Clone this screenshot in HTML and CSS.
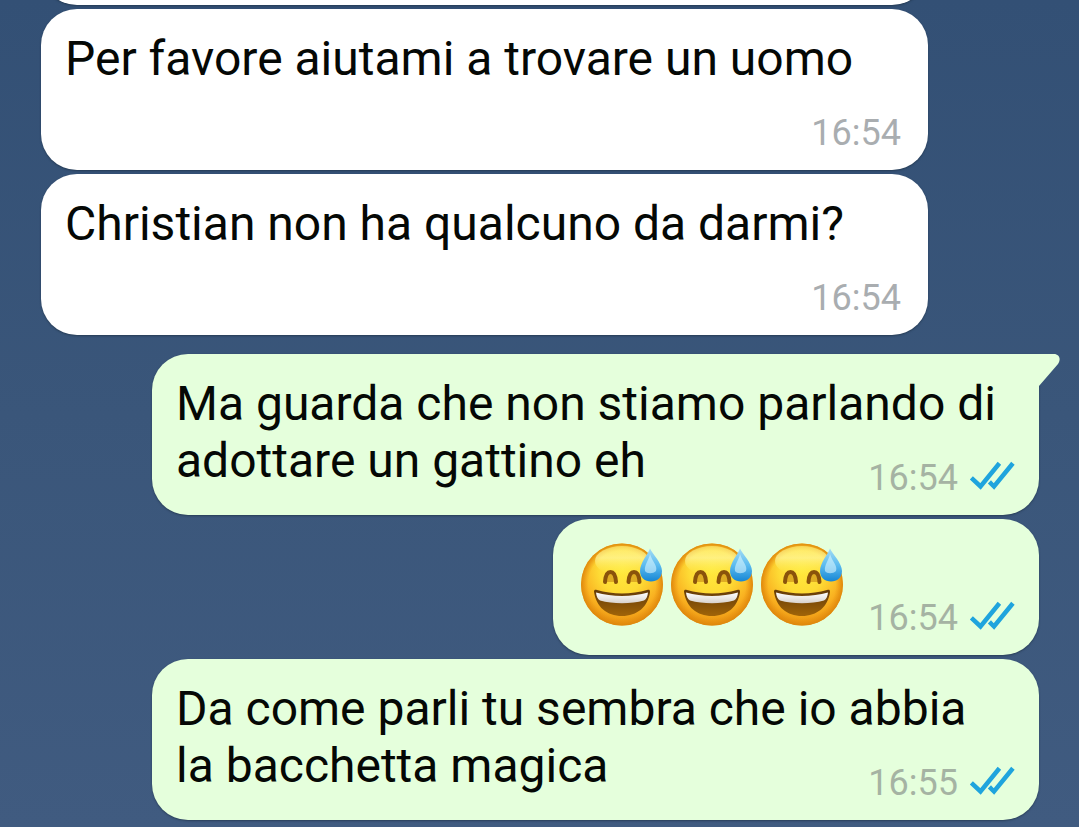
FILE: index.html
```html
<!DOCTYPE html>
<html lang="it">
<head>
<meta charset="utf-8">
<meta name="viewport" content="width=device-width, initial-scale=1">
<title>Chat</title>
<link rel="stylesheet" href="styles.css">
</head>
<body>
<svg class="defs" aria-hidden="true">
  <defs>
    <radialGradient id="face" cx="50%" cy="32%" r="70%">
      <stop offset="0" stop-color="#ffe93c"/>
      <stop offset=".4" stop-color="#fedb35"/>
      <stop offset=".72" stop-color="#f9b020"/>
      <stop offset="1" stop-color="#e58a0d"/>
    </radialGradient>
    <radialGradient id="rim" cx="50%" cy="50%" r="50%">
      <stop offset=".82" stop-color="#e8920f" stop-opacity="0"/>
      <stop offset="1" stop-color="#dd860c" stop-opacity=".95"/>
    </radialGradient>
    <linearGradient id="shine" x1="0" y1="0" x2="0" y2="1">
      <stop offset="0" stop-color="#fff27a" stop-opacity=".6"/>
      <stop offset=".4" stop-color="#fff7a0" stop-opacity=".7"/>
      <stop offset="1" stop-color="#fff04a" stop-opacity="0"/>
    </linearGradient>
    <linearGradient id="mouth" x1="0" y1="0" x2="0" y2="1">
      <stop offset="0" stop-color="#633a08"/>
      <stop offset="1" stop-color="#a06408"/>
    </linearGradient>
    <linearGradient id="teeth" x1="0" y1="0" x2="0" y2="1">
      <stop offset="0" stop-color="#ffffff"/>
      <stop offset="1" stop-color="#d8d2cc"/>
    </linearGradient>
    <linearGradient id="drop" x1="0" y1="0" x2="0" y2="1">
      <stop offset="0" stop-color="#a4dcf4"/>
      <stop offset=".5" stop-color="#5cbcf0"/>
      <stop offset="1" stop-color="#1686d4"/>
    </linearGradient>
    <symbol id="sweat" viewBox="0 0 82 83">
      <circle cx="41" cy="41.5" r="41" fill="url(#face)"/>
      <circle cx="41" cy="41.5" r="41" fill="url(#rim)"/>
      <ellipse cx="41" cy="18" rx="27" ry="15" fill="url(#shine)"/>
      <path d="M24 39C24.500 32 26.500 29 29.500 29S34.500 32 35 39M47.500 39C48 32 50 29 53 29S58 32 58.500 39" fill="#c58414" fill-opacity=".55" stroke="#8a530b" stroke-width="4" stroke-linecap="round"/>
      <path d="M13 48.500C13 46.500 14.500 46.500 16 47C31 51.500 51 51.500 66 47C68 46.500 69 46.500 69 49C67 64 56 73 41 73S15 64 13 48.500Z" fill="url(#mouth)"/>
      <path d="M15 49.500C31 54 51 54 67 49.500C66.500 53.500 65.500 56 63 57.500C50 61 32 61 19 57.500C16.500 56 15.500 53.500 15 49.500Z" fill="url(#teeth)"/>
      <path d="M69 5.500C71.500 11 81 20 81 28C81 34.500 76 38.500 70 38.500S59 34.500 59 28C59 20 67 11 69 5.500Z" fill="url(#drop)"/>
      <path d="M69 11C71 18 77 23 75 28C72 31 66 31 64 28C63 22 68 17 69 11Z" fill="#e4faff" opacity=".55"/>
    </symbol>
    <symbol id="ticks" viewBox="0 0 46 30">
      <g fill="none" stroke="#1fa4dd" stroke-width="4.500" stroke-linecap="square" stroke-linejoin="miter">
        <path d="M4 18.500L11.500 25.500L29 4"/>
        <path d="M22 22.500L25 25.500L42.500 4"/>
      </g>
    </symbol>
  </defs>
</svg>
<main class="chat">
  <div class="bubble received previous" aria-hidden="true"></div>
  <article class="bubble received">
    <p class="text">Per favore aiutami a trovare un uomo</p>
    <footer class="meta"><time>16:54</time></footer>
  </article>
  <article class="bubble received">
    <p class="text">Christian non ha qualcuno da darmi?</p>
    <footer class="meta"><time>16:54</time></footer>
  </article>
  <article class="bubble sent first">
    <svg class="tail" viewBox="0 0 23 34" aria-hidden="true"><path d="M0 0H17C22 0 24.500 5 21 10L2 32V34H0Z" fill="#e5ffdc"/></svg>
    <p class="text">Ma guarda che non stiamo parlando di adottare un gattino eh</p>
    <footer class="meta"><time>16:54</time><svg class="ticks" role="img" aria-label="Letto"><use href="#ticks"/></svg></footer>
  </article>
  <article class="bubble sent emoji">
    <div class="faces" role="img" aria-label="Tre faccine che ridono con goccia di sudore">
      <svg class="face"><use href="#sweat"/></svg>
      <svg class="face"><use href="#sweat"/></svg>
      <svg class="face"><use href="#sweat"/></svg>
    </div>
    <footer class="meta"><time>16:54</time><svg class="ticks" role="img" aria-label="Letto"><use href="#ticks"/></svg></footer>
  </article>
  <article class="bubble sent">
    <p class="text">Da come parli tu sembra che io abbia la bacchetta magica</p>
    <footer class="meta"><time>16:55</time><svg class="ticks" role="img" aria-label="Letto"><use href="#ticks"/></svg></footer>
  </article>
</main>
</body>
</html>
```
FILE: styles.css
```css
* {
  box-sizing: border-box;
}

body {
  margin: 0;
  min-height: 100vh;
  overflow: hidden;
  background: linear-gradient(#335075, #3a567a 50%, #405b80);
  font-family: Roboto, "Liberation Sans", sans-serif;
  color: #050805;
}

.defs {
  position: absolute;
  width: 0;
  height: 0;
}

.chat {
  display: flex;
  flex-direction: column;
  gap: 4px;
  padding: 0 40px 6px 41px;
}

.bubble {
  display: grid;
  width: calc(100% - 111px);
  padding: 21px 24px 16px;
  border-radius: 36px;
  box-shadow: 0 1px 2px rgba(20, 35, 50, 0.5);
}

.received {
  row-gap: 25px;
  padding-right: 27px;
  background: #fff;
}

.previous {
  height: 161px;
  margin-top: -156px;
}

.sent {
  align-self: flex-end;
  background: #e5ffdc;
}

.first {
  position: relative;
  margin-top: 15px;
  border-top-right-radius: 0;
}

.text {
  margin: 0;
  font-size: 48px;
  line-height: 57px;
}

.sent .text {
  grid-area: 1 / 1;
  padding-bottom: 10px;
}

.meta {
  display: flex;
  align-items: center;
  gap: 11px;
  justify-self: end;
  align-self: end;
  font-size: 36px;
  line-height: 42px;
  color: #a9adb0;
}

.sent .meta {
  grid-area: 1 / 1;
  color: #a5b3a3;
}

.ticks {
  width: 46px;
  height: 30px;
  margin-bottom: 4px;
}

.tail {
  position: absolute;
  top: 0;
  left: calc(100% - 2px);
  width: 23px;
  height: 34px;
}

.emoji {
  width: fit-content;
  grid-template-columns: auto auto;
  column-gap: 25px;
  padding-top: 24px;
  padding-left: 28px;
}

.sent.emoji .meta {
  grid-area: 1 / 2;
}

.faces {
  display: flex;
  gap: 8px;
  padding-bottom: 13px;
}

.face {
  width: 82px;
  height: 83px;
}
```
